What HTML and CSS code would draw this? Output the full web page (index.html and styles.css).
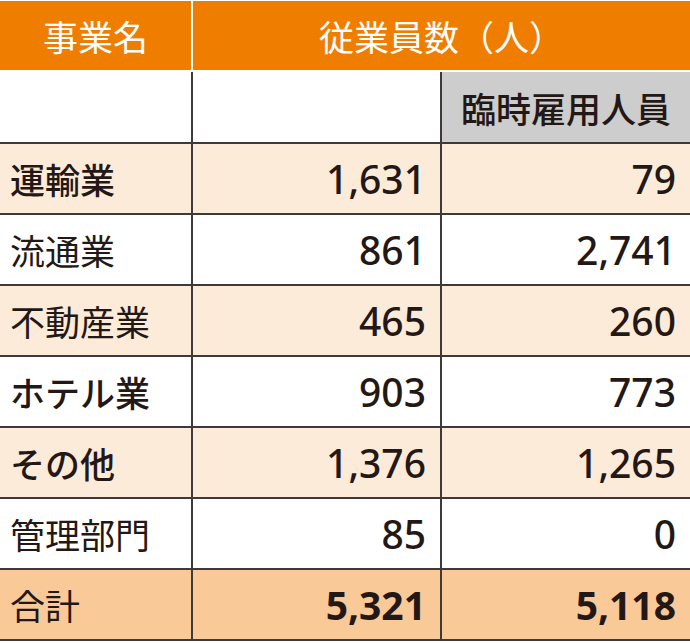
FILE: index.html
```html
<!DOCTYPE html>
<html lang="ja">
<head>
<meta charset="utf-8">
<title>従業員数</title>
<link rel="stylesheet" href="styles.css">
</head>
<body>
<div class="table">
  <div class="cell head first">事業名</div>
  <div class="cell head span2">従業員数（人）</div>

  <div class="cell sub first"></div>
  <div class="cell sub mid"></div>
  <div class="cell sub gray">臨時雇用人員</div>

  <div class="cell label strong peach first">運輸業</div>
  <div class="cell num peach mid">1,631</div>
  <div class="cell num peach">79</div>

  <div class="cell label first">流通業</div>
  <div class="cell num mid">861</div>
  <div class="cell num">2,741</div>

  <div class="cell label peach first">不動産業</div>
  <div class="cell num peach mid">465</div>
  <div class="cell num peach">260</div>

  <div class="cell label strong first">ホテル業</div>
  <div class="cell num mid">903</div>
  <div class="cell num">773</div>

  <div class="cell label strong peach first">その他</div>
  <div class="cell num peach mid">1,376</div>
  <div class="cell num peach">1,265</div>

  <div class="cell label first">管理部門</div>
  <div class="cell num mid">85</div>
  <div class="cell num">0</div>

  <div class="cell label total first">合計</div>
  <div class="cell num total bold mid">5,321</div>
  <div class="cell num total bold">5,118</div>
</div>
</body>
</html>
```

FILE: styles.css
```css
html, body {
  margin: 0;
  padding: 0;
  background: #ffffff;
}

body {
  font-family: "Noto Sans CJK JP", "Noto Sans", sans-serif;
  color: #231815;
}

.table {
  display: grid;
  grid-template-columns: 193px 249px 248px;
  grid-template-rows: 71px 72px repeat(7, 71px);
  width: 690px;
  padding-top: 1px;
}

.cell {
  box-sizing: border-box;
  display: flex;
  align-items: center;
  font-size: 35px;
  font-weight: 400;
  line-height: 1;
  border-bottom: 2px solid #3e3a39;
}

.head {
  background: #ef7d00;
  color: #ffffff;
  justify-content: center;
  border-bottom: 2px solid #ffffff;
}

.span2 {
  grid-column: span 2;
}

.first,
.mid {
  border-right: 2px solid #3e3a39;
}

.head.first {
  border-right-color: #ffffff;
}

.gray {
  background: #cdcdce;
  justify-content: center;
  font-weight: 500;
}

.label {
  padding-left: 10px;
}

.label.strong {
  font-weight: 500;
}

.num {
  justify-content: flex-end;
  padding-right: 14px;
  font-family: "Noto Sans", "Open Sans", sans-serif;
  font-size: 39px;
  font-weight: 500;
  padding-bottom: 1px;
}

.peach {
  background: #fdebd9;
}

.total {
  background: #fac998;
}

.num.bold {
  font-weight: 700;
}
```
